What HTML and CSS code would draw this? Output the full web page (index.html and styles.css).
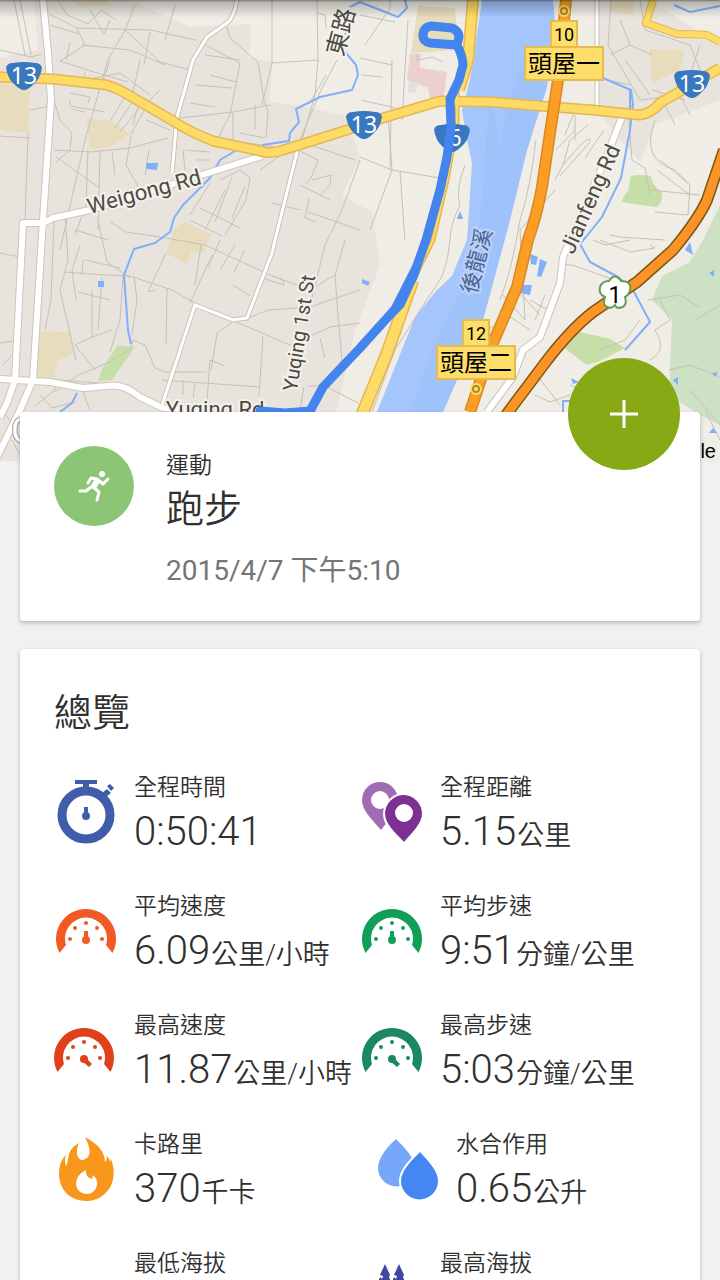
FILE: index.html
```
<!DOCTYPE html>
<html lang="zh-Hant">
<head>
<meta charset="utf-8">
<meta name="viewport" content="width=device-width, initial-scale=1">
<title>跑步</title>
<link rel="stylesheet" href="styles.css">
</head>
<body>
<main class="app">
  <svg class="map" viewBox="0 0 720 461" role="img" aria-label="路線地圖">
    <defs>
      <linearGradient id="top-shade" x1="0" y1="0" x2="0" y2="1">
        <stop offset="0" stop-color="#000" stop-opacity=".5"/>
        <stop offset=".12" stop-color="#000" stop-opacity=".24"/>
        <stop offset="1" stop-color="#000" stop-opacity="0"/>
      </linearGradient>
      <path id="shield" d="M-18-8Q-17-13-11-13Q0-15 11-13Q17-13 18-8Q16 3 10 8Q4 14 0 14Q-4 14-10 8Q-16 3-18-8Z"/>
    </defs>
    <rect width="720" height="461" fill="#efede5"/>
    <!-- built-up areas -->
    <g fill="#e8e4dd">
      <path d="M34 0H130L190 27 251 24 249 57 272 62 270 102 300 106 346 116 360 158 342 195 372 212 380 265 355 330 325 461H0V58L38 50Z"/>
      <path d="M598 0H650L720 45V100L655 125 640 162 612 130 597 108Z"/>
      <path d="M360 430L420 461H330Z"/>
    </g>
    <g fill="#e7dcbc">
      <path d="M0 84L30 86 28 133 0 130ZM86 118L110 121 131 134 112 146 90 150ZM175 228L185 222 212 235 203 253 191 252 187 264 166 253ZM40 331L71 332 73 354 58 360 54 378 37 377ZM72 0H108V5L80 7ZM418 6L455 8 459 50 411 53ZM649 50L684 50 680 70 652 83ZM610 0H636L632 14 610 12Z"/>
    </g>
    <path fill="#ecd0cd" d="M410 54L421 54 420 68 447 72 444 95 430 99 428 88 407 80Z"/>
    <path fill="#dfe1dc" d="M409 82L418 82 416 93 408 92Z"/>
    <g fill="#cde2c4">
      <path d="M720 205L703 240 690 262 662 276 652 300 672 320 669 395 700 415 720 425Z"/>
      <path fill="#c6dfa9" d="M117 346L135 347 112 380 98 381 102 369ZM631 176Q640 174 651 176Q652 186 662 192Q663 202 657 207L640 205 622 202Q624 194 628 191ZM563 347Q572 328 585 333L610 339 625 348 600 361 587 365Z"/>
    </g>
    <!-- river -->
    <path fill="#a5c5fd" d="M482 0H553L555 20 547 87 527 150 510 220 483 320 443 412 426 461H357L377 412 415 317 437 290 452 276 467 240 472 163 467 140 462 110 470 80Z"/>
    <path fill="#9dbffa" opacity=".55" d="M490 90L500 145Q508 90 527 50L547 87 527 150 510 220 483 320 443 412H410L440 330 470 276 480 220Z"/>
    <!-- side streets -->
    <g class="street">
      <path d="M14 0L25 55M20 0L31 55M0 50L31 57 42 54M49 14L77 28 85 45 60 61M50 25L80 34M58 0L67 15 88 24 101 10 116 20M90 10L104 34 110 20M135 5L125 30 108 60 85 140 60 250M165 40L175 5M77 28L150 30 196 40M125 30L160 62 190 70M82 45L130 50 165 65M60 61L94 72 128 82M70 42L66 60M110 60L101 87M140 60L133 92M150 32L144 65M85 72L84 80 120 73 150 95M200 42L240 63 230 115 217 140M226 24L230 38 258 62 264 100 268 112 266 138M205 55L240 60M210 75L236 82M195 85L232 88M190 103L215 107M180 118L233 112 270 105M272 0V63L262 105M272 63L318 60 317 0M318 60L315 95 302 140 260 170M318 13L325 15 326 28M337 60L320 92 300 140M326 75L309 104M255 105V130M233 112V140M240 133L265 138"/>
      <path d="M54 100L60 120 72 133 70 150 56 162M30 110L51 106M0 136L30 138M28 133L25 220M54 150L90 152 130 148 168 138M88 150L86 205 75 235M56 157L100 188M131 134L150 100 160 90M110 121L128 92M115 128L137 95M120 132L146 100M140 98L133 125M146 120L170 130M131 136L126 165 140 190M149 150L145 175M70 93L90 97 88 103M70 100V106L105 112M73 109L85 112M100 150L98 230M112 152L115 175M183 150L185 170M185 150L210 152M196 160H210M224 140L270 146 284 150M220 180L240 170 250 178 246 200 225 235M210 183L190 215M225 190L205 230M232 177L215 222M245 186L232 218M200 208L240 228M190 220L222 236M298 150L318 160 311 178 306 184M312 180L331 175 330 185 320 196M300 185L330 200M309 198L305 218 316 222M308 212L360 230M360 160L342 210 325 245 307 318M272 203L300 210M295 140L355 160"/>
      <path d="M0 253L20 257M42 225L65 215 68 260 60 290 76 360M54 222L51 300 45 330M65 272L105 275 130 276 172 290 195 303M98 220L107 262 130 278M110 222L126 232 160 237 205 245 270 275 310 290M75 230L108 240M80 245L72 270 76 300M85 260L120 268M83 260L82 275M123 276L120 320 110 352M92 290V337M78 292L110 300M102 277L98 330M75 345L92 337 112 330M134 276L137 300 132 335M167 288L166 345M155 290L149 292M166 253L148 292M201 245L195 285M212 255L190 303M220 240L208 268M235 245L220 270M245 250L234 272M272 253L260 290M270 275L283 280 284 285 262 278M233 285L250 296M249 318L268 310 310 307 360 290M233 322L217 333 211 370M236 322L290 345M263 336L259 396M290 345L330 327 360 323M207 372H165L155 368 145 345 133 340 130 349 110 362 78 375 55 392M162 380L260 387M207 400L210 360 225 366M310 290L335 275 345 240M335 275L338 315 342 360 325 385M320 338L325 358M304 387L300 410M307 386H325L358 403M183 380V395M195 382L193 398M95 370L75 345M56 378L55 390 36 405M40 395L52 408 75 402M60 380L110 384M0 343L15 341M3 365L17 350"/>
      <path d="M390 0V8L365 45M360 15L395 22M360 58L392 65M362 75L382 77M361 100L395 108M392 60L390 170M418 60L432 57 443 62M388 115L392 170 360 157M392 170L370 230M400 172L405 240M392 170L440 178M408 20L402 120M417 54V62M607 80L630 85M611 0L608 45 640 100 680 95 690 115M620 20L630 45 652 55M630 45L610 55M640 0L645 30 690 45M690 45L700 70M625 60L650 95M660 95L675 125M652 90L685 100M700 45L690 75M565 135L575 110 597 108M575 115V140M588 125L570 140 563 165 555 180M563 165Q592 130 590 142L560 176M556 150L575 130M604 130L585 158M628 110L632 160 645 168 650 195M655 120Q640 160 675 170L690 185M657 170L690 195M650 190L700 195M660 160L670 168 690 185 688 215 655 212M555 190L520 230 525 320M600 240L630 252 655 248 650 245M610 235L620 237 665 240M593 240L605 245 630 240M560 263L575 266 615 280M648 300L680 295 700 308M695 320L720 305M669 370L690 365 720 377M570 385L610 400M535 395L550 402 570 395M533 370L560 405M650 360Q668 350 655 330L670 320 660 300M600 350L625 340 640 320M500 310L530 330M503 295L525 320M517 290L540 315M545 295L535 320M530 300L548 310M500 325L480 330"/>
      <path d="M0 410L15 425M12 440L20 455M50 415L70 455M80 385L90 410M720 425L690 390M705 410L720 440"/>
      <path d="M465 165Q455 190 460 205Q450 225 450 240Q447 270 438 283L420 310 395 350 372 412M536 140Q530 190 520 220Q512 270 500 300"/>
    </g>
    <!-- streams -->
    <g fill="none" stroke="#82aff9" stroke-width="2" stroke-linejoin="round">
      <path d="M360 2L350 7 349 18 342 48 356 65 358 75 352 90 320 97 296 109 299 122 290 133 289 141 262 145M235 151L220 160 210 178 183 205 174 218 170 232 155 243 134 249 124 275 128 330 131 344M77 393L72 403 60 412M360 2L398 17 407 8 405 0M603 78L631 90 633 105 630 130 621 178 602 217 590 232 580 244 590 262 618 277 633 290 650 322 625 350M630 90V120M631 105L629 110M674 5L690 12 720 6M563 412V401H590"/>
    </g>
    <path fill="#82aff9" d="M146 163H158L157 170 146 169ZM98 281H104V287H98ZM362 279L370 282 368 286 362 283ZM460 211L463 219 457 219ZM530 254L538 257 536 265 531 264ZM540 259L547 262 541 277 537 276ZM522 285L532 285 530 295 521 293ZM571 378L579 382 573 384ZM690 242L693 255 685 250ZM709 273L714 270V277ZM673 380L678 377V385ZM712 373L718 372 715 377ZM709 433L713 428 717 433Z"/>
    <!-- white roads -->
    <g class="road road-edge">
      <path d="M43 0L48 53 51 100 47 160 43 220 33 380 20 410 -3 457M0 417L7 403 15 380 23 223H43L53 218 90 210 262 156M0 379L50 382 83 388 108 386Q123 383 140 397L163 408 200 410"/>
      <path d="M622 117L608 153 563 257 560 283 540 337 523 350 513 377 487 412"/>
    </g>
    <g class="road">
      <path d="M43 0L48 53 51 100 47 160 43 220 33 380 20 410 -3 457M0 417L7 403 15 380 23 223H43L53 218 90 210 262 156M0 379L50 382 83 388 108 386Q123 383 140 397L163 408 200 410"/>
      <path d="M622 117L608 153 563 257 560 283 540 337 523 350 513 377 487 412"/>
    </g>
    <path class="lane lane-edge" d="M237 0Q234 18 227 23L207 37 193 60 177 117 172 173M298 148L275 240 272 253 247 318 233 320 195 305 162 405M597 0V108"/>
    <path class="lane" d="M237 0Q234 18 227 23L207 37 193 60 177 117 172 173M298 148L275 240 272 253 247 318 233 320 195 305 162 405M597 0V108"/>
    <!-- main roads -->
    <g fill="none" stroke-linejoin="round">
      <g stroke="#e5b651">
        <path stroke-width="11" d="M0 77L53 79 107 85Q117 88 127 94L173 121Q190 132 213 141L260 151Q268 154 280 151L347 130 383 118 440 101 493 102 540 106 593 110 640 115Q652 113 660 103L720 68"/>
        <path stroke-width="12" d="M473 0L468 60 459 90"/>
        <path stroke-width="5" d="M457 90V123L447 180 433 240 410 287"/>
        <path stroke-width="13" d="M413 280L387 353 363 412 345 461"/>
        <path stroke-width="8" d="M653 0L646 23 677 34Q700 34 707 35L720 42"/>
      </g>
      <g stroke="#fedb66">
        <path stroke-width="8" d="M0 77L53 79 107 85Q117 88 127 94L173 121Q190 132 213 141L260 151Q268 154 280 151L347 130 383 118 440 101 493 102 540 106 593 110 640 115Q652 113 660 103L720 68"/>
        <path stroke-width="9" d="M473 0L468 60 459 90"/>
        <path stroke-width="2" d="M457 90V123L447 180 433 240 410 287"/>
        <path stroke-width="10" d="M413 280L387 353 363 412 345 461"/>
        <path stroke-width="6" d="M653 0L646 23 677 34Q700 34 707 35L720 42"/>
      </g>
      <path stroke="#dd8721" stroke-width="12" d="M566 0L558 80 550 133 542 187Q537 215 528 240L517 287 493 343 470 412"/>
      <path stroke="#fb9e26" stroke-width="9" d="M566 0L558 80 550 133 542 187Q537 215 528 240L517 287 493 343 470 412"/>
      <path stroke="#7c5714" stroke-width="12" d="M506 415L545 363Q570 330 593 312L637 282 673 250Q698 220 707 200L724 150"/>
      <path stroke="#fb9327" stroke-width="9" d="M506 415L545 363Q570 330 593 312L637 282 673 250Q698 220 707 200L724 150"/>
    </g>
    <!-- route shields -->
    <g fill="#3878bf">
      <use href="#shield" x="24" y="76"/><use href="#shield" x="364" y="125"/><use href="#shield" x="452" y="138"/><use href="#shield" x="692" y="84"/>
    </g>
    <g class="shield-text">
      <text x="24" y="84">13</text><text x="364" y="133">13</text><text x="455" y="146">6</text><text x="692" y="92">13</text>
    </g>
    <path fill="#fff" stroke="#669a55" stroke-width="2" d="M609 281Q615 272 621 281Q632 281 630 290Q629 295 625 297Q628 307 619 308Q616 308 615 305Q612 309 607 307Q602 304 605 297Q598 294 600 287Q602 281 609 281Z"/>
    <text class="route-one" x="615" y="303">1</text>
    <!-- interchanges -->
    <g fill="#fede6b" stroke="#e5bb50" stroke-width="2">
      <rect x="551" y="21" width="26" height="26"/><rect x="525" y="47" width="78" height="33"/>
      <rect x="463" y="320" width="26" height="26"/><rect x="437" y="346" width="78" height="33"/>
    </g>
    <g class="sign">
      <text class="sign-num" x="564" y="41">10</text><text x="564" y="72">頭屋一</text>
      <text class="sign-num" x="476" y="340">12</text><text x="476" y="371">頭屋二</text>
    </g>
    <g fill="#b8862d" stroke="#fddc5a" stroke-width="2">
      <circle cx="564" cy="11" r="5"/><circle cx="476" cy="389" r="5"/>
    </g>
    <g fill="#ffe06e"><circle cx="564" cy="11" r="2"/><circle cx="476" cy="389" r="2"/></g>
    <!-- place names -->
    <g class="place">
      <text transform="translate(146 199) rotate(-15)">Weigong Rd</text>
      <text class="place-small" transform="translate(306 334) rotate(-81)">Yuqing 1st St</text>
      <text transform="translate(597 202) rotate(-66)">Jianfeng Rd</text>
      <text transform="translate(215 417)">Yuqing Rd</text>
      <text class="place-large" transform="translate(349 34) rotate(-75)">東路</text>
      <text class="water-name" transform="translate(484 263) rotate(-76)">後龍溪</text>
    </g>
    <!-- recorded track -->
    <path fill="none" stroke="#4384ef" stroke-width="9" stroke-linejoin="round" stroke-linecap="round" d="M457 45L430 43Q422 41 423 34Q424 27 431 26L452 28Q459 31 459 37L457 45Q463 57 463 65L459 80 450 99 451 127 447 157 440 190 426 240 413 277 397 307M397 307L360 348 323 387 310 411 285 413 260 411"/>
    <path fill="#4384ef" d="M413 264L419 274 404 307 392 319 386 317Z"/>
    <text class="logo" x="11" y="443">Google</text>
    <text class="credit" x="716" y="458">Google</text>
    <rect width="720" height="18" fill="url(#top-shade)"/>
  </svg>

  <div class="cards">
    <section class="card activity">
      <span class="activity-icon">
        <svg viewBox="0 0 80 80" aria-hidden="true">
          <circle cx="48" cy="28" r="3" fill="#fff"/>
          <g fill="none" stroke="#fff" stroke-width="3" stroke-linecap="round" stroke-linejoin="round">
            <path d="M34 37L37 32 43 33 49 38 54 33M39 41L45 46 43 54M37 41L32 45H26"/>
            <path stroke-width="6" d="M43 35L40 40"/>
          </g>
        </svg>
      </span>
      <div class="activity-text">
        <p class="label">運動</p>
        <h1 class="title">跑步</h1>
        <p class="date">2015/4/7 下午5:10</p>
      </div>
      <button class="fab" type="button" aria-label="新增">
        <svg viewBox="0 0 28 28" aria-hidden="true"><path d="M14 0V28M0 14H28" stroke="#fff" stroke-width="3"/></svg>
      </button>
    </section>

    <section class="card overview">
      <h2 class="title overview-title">總覽</h2>
      <dl class="stats">
        <div class="stat">
          <svg class="stat-icon" viewBox="0 0 64 64" fill="#3f5dab" aria-hidden="true">
            <circle cx="32" cy="35" r="24" fill="none" stroke="#3f5dab" stroke-width="9"/>
            <path d="M21 0H43V4H35V9H29V4H21ZM48 13L53 9 57 13 52 17ZM53 6L56 4 60 8 57 11ZM30 27H34V35H30Z"/><circle cx="32" cy="36" r="4"/>
          </svg>
          <dt class="label">全程時間</dt><dd class="value">0:50:41</dd>
        </div>
        <div class="stat">
          <svg class="stat-icon" viewBox="0 0 64 64" aria-hidden="true">
            <path fill="#a06cb4" fill-rule="evenodd" d="M20 2A18 18 0 0 1 38 20C38 32 30 38 21 50C10 37 2 30 2 20A18 18 0 0 1 20 2ZM20 11A9 9 0 1 0 20 29A9 9 0 1 0 20 11Z"/>
            <path fill="#fff" d="M44 13A21 21 0 0 1 65 34C65 46 53 56 44 66C35 56 23 46 23 34A21 21 0 0 1 44 13Z"/>
            <path fill="#7c3093" fill-rule="evenodd" d="M44 15A19 19 0 0 1 62 33C62 44 53 51 44 62C34 51 25 44 25 33A19 19 0 0 1 44 15ZM44 24A9 9 0 1 0 44 42A9 9 0 1 0 44 24Z"/>
          </svg>
          <dt class="label">全程距離</dt><dd class="value">5.15<span class="unit">公里</span></dd>
        </div>
        <div class="stat">
          <svg class="stat-icon" viewBox="0 0 64 64" fill="#f15a25" aria-hidden="true">
            <g id="dial"><path d="M5.500 54A30 30 0 1 1 58.500 54L52 46A21 21 0 1 0 12 46Z"/><circle cx="16" cy="40" r="2"/><circle cx="21" cy="29" r="2"/><circle cx="32" cy="24" r="2"/><circle cx="43" cy="29" r="2"/><circle cx="48" cy="40" r="2"/><circle cx="32" cy="41" r="4"/></g>
            <path d="M30 32H34V41H30Z"/>
          </svg>
          <dt class="label">平均速度</dt><dd class="value">6.09<span class="unit">公里/小時</span></dd>
        </div>
        <div class="stat">
          <svg class="stat-icon" viewBox="0 0 64 64" fill="#0f9f58" aria-hidden="true"><use href="#dial"/><path d="M30 32H34V41H30Z"/></svg>
          <dt class="label">平均步速</dt><dd class="value">9:51<span class="unit">分鐘/公里</span></dd>
        </div>
        <div class="stat">
          <svg class="stat-icon" viewBox="2 0 64 64" fill="#e1401d" aria-hidden="true"><use href="#dial"/><path d="M33 39L40 46 37 49 30 43Z"/></svg>
          <dt class="label">最高速度</dt><dd class="value">11.87<span class="unit">公里/小時</span></dd>
        </div>
        <div class="stat">
          <svg class="stat-icon" viewBox="0 0 64 64" fill="#1b8764" aria-hidden="true"><use href="#dial"/><path d="M33 39L40 46 37 49 30 43Z"/></svg>
          <dt class="label">最高步速</dt><dd class="value">5:03<span class="unit">分鐘/公里</span></dd>
        </div>
        <div class="stat">
          <svg class="stat-icon" viewBox="0 0 64 64" aria-hidden="true">
            <path fill="#f7981d" d="M31 0C44 7 51 15 51 25Q53 23 53 19Q56 22 56 25L57 22C66 46 51 64 32 64C14 64 5 50 5 37Q5 24 12 18Q10 24 12 29Q13 28 14 22Q15 11 25 6C21 15 23 23 29 23C39 20 36 10 31 0Z"/>
            <path fill="#fff" d="M32 33Q31 40 38 42L39 38Q44 43 43 48Q41 57 32 57Q23 56 22 47Q22 38 32 33Z"/>
          </svg>
          <dt class="label">卡路里</dt><dd class="value">370<span class="unit">千卡</span></dd>
        </div>
        <div class="stat stat-inset">
          <svg class="stat-icon" viewBox="0 0 64 64" aria-hidden="true">
            <path fill="#77a7fa" d="M20 2C28 10 39 21 39 31A18 18 0 0 1 2 31C2 21 11 10 20 2Z"/>
            <path fill="#4486f4" stroke="#fff" stroke-width="4" paint-order="stroke" d="M44 15C53 25 62 34 62 44A18 18 0 0 1 25 44C25 34 34 25 44 15Z"/>
          </svg>
          <dt class="label">水合作用</dt><dd class="value">0.65<span class="unit">公升</span></dd>
        </div>
        <div class="stat">
          <span class="stat-icon"></span>
          <dt class="label">最低海拔</dt>
        </div>
        <div class="stat">
          <svg class="stat-icon" viewBox="0 0 64 64" fill="#4145a0" aria-hidden="true">
            <path d="M25 8L30 19 29 21 31 26H18L20 21 22 23 23 20 20 19ZM39 8L44 19 43 21 45 26H32L34 21 36 23 37 20 34 19Z"/>
          </svg>
          <dt class="label">最高海拔</dt>
        </div>
      </dl>
    </section>
  </div>
</main>
</body>
</html>
```
FILE: styles.css
```
* {
  box-sizing: border-box;
}

body,
h1,
h2,
p,
dl,
dd {
  margin: 0;
}

body {
  background: #f1f1f1;
  color: #303030;
  font-family: Roboto, "Noto Sans CJK TC", sans-serif;
}

.app {
  height: 100vh;
  overflow: hidden;
}

.map {
  display: block;
  width: 100%;
  height: auto;
}

.street {
  fill: none;
  stroke: #c6c1b6;
  stroke-width: 1;
}

.road {
  fill: none;
  stroke: #fff;
  stroke-width: 6;
  stroke-linejoin: round;
}

.road-edge {
  stroke: #cbc6ba;
  stroke-width: 8;
}

.lane {
  fill: none;
  stroke: #fff;
  stroke-width: 3;
}

.lane-edge {
  stroke: #c9c4b8;
  stroke-width: 5;
}

.shield-text {
  fill: #fff;
  font-size: 23px;
  font-family: "Noto Sans", sans-serif;
  text-anchor: middle;
}

.route-one {
  font-size: 23px;
  text-anchor: middle;
}

.sign {
  font-size: 24px;
  text-anchor: middle;
}

.sign-num {
  font-size: 18px;
}

.place {
  fill: #4d4a42;
  stroke: #f4f1ec;
  stroke-width: 4;
  paint-order: stroke;
  font-size: 22px;
  text-anchor: middle;
}

.place-small {
  font-size: 20px;
}

.place-large {
  font-size: 24px;
}

.water-name {
  fill: #4b6390;
  stroke: #b9d1fb;
}

.logo {
  fill: #fff;
  stroke: #9b9993;
  stroke-width: 2;
  paint-order: stroke;
  font-size: 36px;
}

.credit {
  font-family: "Liberation Sans", sans-serif;
  font-size: 20px;
  text-anchor: end;
}

.cards {
  position: relative;
  display: flex;
  flex-direction: column;
  gap: 28px;
  margin-top: -49px;
  padding: 0 20px 28px;
}

.card {
  padding: 34px;
  border-radius: 4px;
  background: #fff;
  box-shadow: 0 2px 4px rgba(0, 0, 0, 0.25);
}

.activity {
  position: relative;
  display: flex;
  gap: 32px;
}

.activity-icon {
  flex: none;
  width: 80px;
  height: 80px;
  border-radius: 50%;
  background: #8dc576;
}

.activity-text {
  padding-top: 6px;
}

.label {
  font-size: 23px;
  font-weight: 350;
  line-height: 28px;
}

.title {
  font-size: 38px;
  font-weight: 350;
  line-height: 48px;
  margin-top: 5px;
}

.date {
  margin-top: 22px;
  color: #757575;
  font-size: 28px;
  line-height: 32px;
}

.fab {
  position: absolute;
  top: -54px;
  right: 20px;
  display: grid;
  place-items: center;
  width: 112px;
  height: 112px;
  padding: 0;
  border: 0;
  border-radius: 50%;
  background: #87a915;
}

.fab svg {
  width: 28px;
  height: 28px;
}

.overview-title {
  margin: 6px 0 37px;
}

.stats {
  display: grid;
  grid-template-columns: 1fr 1fr;
  row-gap: 37px;
}

.stat {
  display: grid;
  grid-template-columns: 64px 1fr;
  grid-template-rows: 28px 48px;
  gap: 6px 16px;
}

.stat-inset {
  padding-left: 16px;
}

.stat-icon {
  grid-row: 1 / 3;
  width: 64px;
  height: 64px;
  margin-top: 6px;
}

.value {
  font-size: 40px;
  font-weight: 300;
  line-height: 48px;
  white-space: nowrap;
}

.unit {
  margin-left: 1px;
  font-size: 27px;
  font-weight: 350;
}
```
